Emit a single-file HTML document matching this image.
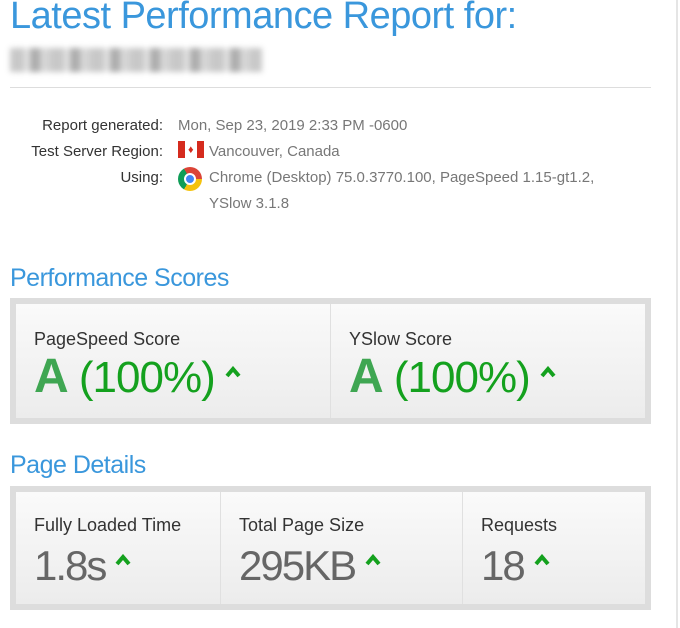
<!DOCTYPE html>
<html><head><style>
body{margin:0;width:680px;height:628px;background:#fff;font-family:"Liberation Sans",sans-serif;position:relative;overflow:hidden}
.a{position:absolute;white-space:nowrap}
h1{position:absolute;left:10px;top:-5px;margin:0;font-weight:normal;font-size:38px;color:#3a97dc;letter-spacing:-0.5px}
h2{position:absolute;margin:0;font-weight:normal;font-size:25px;color:#3a97dc;letter-spacing:-0.5px;left:10px}
.blur{position:absolute;left:10px;top:48px;width:252px;height:24px;background:repeating-linear-gradient(90deg,#bbb 0 14px,#ddd 14px 20px,#999 20px 30px,#ccc 30px 40px);filter:blur(3px);opacity:.8}
.lab{right:517px;font-size:15px;color:#333;text-align:right}
.val{left:178px;font-size:15px;color:#777}
.box{position:absolute;left:10px;width:629px;border:6px solid #ddd;background:linear-gradient(#fafafa,#ececec);display:flex}
.cell{position:relative;border-right:1px solid #e0e0e0;height:100%}
.cell:last-child{border-right:none}
.t{position:absolute;left:18px;font-size:18px;color:#333}
.g{position:absolute;left:18px;font-size:44px;color:#14a11e;white-space:nowrap;letter-spacing:-1px}
.g b{font-size:48px;color:#3fa652;font-weight:bold}
.n{position:absolute;left:18px;font-size:42px;color:#666;white-space:nowrap;letter-spacing:-2px}
.up{display:inline-block;width:16px;height:12px;margin-left:10px;vertical-align:14px}
</style></head><body>
<h1>Latest Performance Report for:</h1>
<div class="blur"></div>
<div class="a" style="left:10px;top:87px;width:641px;height:1px;background:#ddd"></div>
<div class="a" style="left:676px;top:0;width:2px;height:628px;background:#e5e5e5"></div>
<div class="a lab" style="top:117px">Report generated:</div>
<div class="a val" style="top:117px">Mon, Sep 23, 2019 2:33 PM -0600</div>
<div class="a lab" style="top:143px">Test Server Region:</div>
<div class="a" style="left:178px;top:141px;width:26px;height:17px;background:linear-gradient(90deg,#d52b1e 0 7px,#fff 7px 19px,#d52b1e 19px)"></div>
<div class="a" style="left:188px;top:144px;color:#d52b1e;font-size:11px">♦</div>
<div class="a val" style="left:209px;top:143px">Vancouver, Canada</div>
<div class="a lab" style="top:169px">Using:</div>
<div class="a" style="left:178px;top:167px;width:24px;height:24px;border-radius:50%;background:conic-gradient(from -30deg,#db4437 0 120deg,#f4c20d 120deg 240deg,#0f9d58 240deg 360deg)"></div>
<div class="a" style="left:184px;top:173px;width:8px;height:8px;border-radius:50%;background:#4285f4;border:2px solid #fff"></div>
<div class="a val" style="left:209px;top:169px">Chrome (Desktop) 75.0.3770.100, PageSpeed 1.15-gt1.2,</div>
<div class="a val" style="left:209px;top:195px">YSlow 3.1.8</div>
<h2 style="top:264px">Performance Scores</h2>
<div class="box" style="top:298px;height:114px">
<div class="cell" style="width:314px"><div class="t" style="top:25px">PageSpeed Score</div><div class="g" style="top:45px"><b>A</b> (100%)<svg class="up" viewBox="0 0 16 12"><polyline points="2,10 8,3 14,10" fill="none" stroke="#14a11e" stroke-width="4"/></svg></div></div>
<div class="cell" style="flex:1"><div class="t" style="top:25px">YSlow Score</div><div class="g" style="top:45px"><b>A</b> (100%)<svg class="up" viewBox="0 0 16 12"><polyline points="2,10 8,3 14,10" fill="none" stroke="#14a11e" stroke-width="4"/></svg></div></div>
</div>
<h2 style="top:451px">Page Details</h2>
<div class="box" style="top:486px;height:112px">
<div class="cell" style="width:204px"><div class="t" style="top:23px">Fully Loaded Time</div><div class="n" style="top:50px">1.8s<svg class="up" viewBox="0 0 16 12"><polyline points="2,10 8,3 14,10" fill="none" stroke="#14a11e" stroke-width="4"/></svg></div></div>
<div class="cell" style="width:241px"><div class="t" style="top:23px">Total Page Size</div><div class="n" style="top:50px">295KB<svg class="up" viewBox="0 0 16 12"><polyline points="2,10 8,3 14,10" fill="none" stroke="#14a11e" stroke-width="4"/></svg></div></div>
<div class="cell" style="flex:1"><div class="t" style="top:23px">Requests</div><div class="n" style="top:50px">18<svg class="up" viewBox="0 0 16 12"><polyline points="2,10 8,3 14,10" fill="none" stroke="#14a11e" stroke-width="4"/></svg></div></div>
</div>
</body></html>
